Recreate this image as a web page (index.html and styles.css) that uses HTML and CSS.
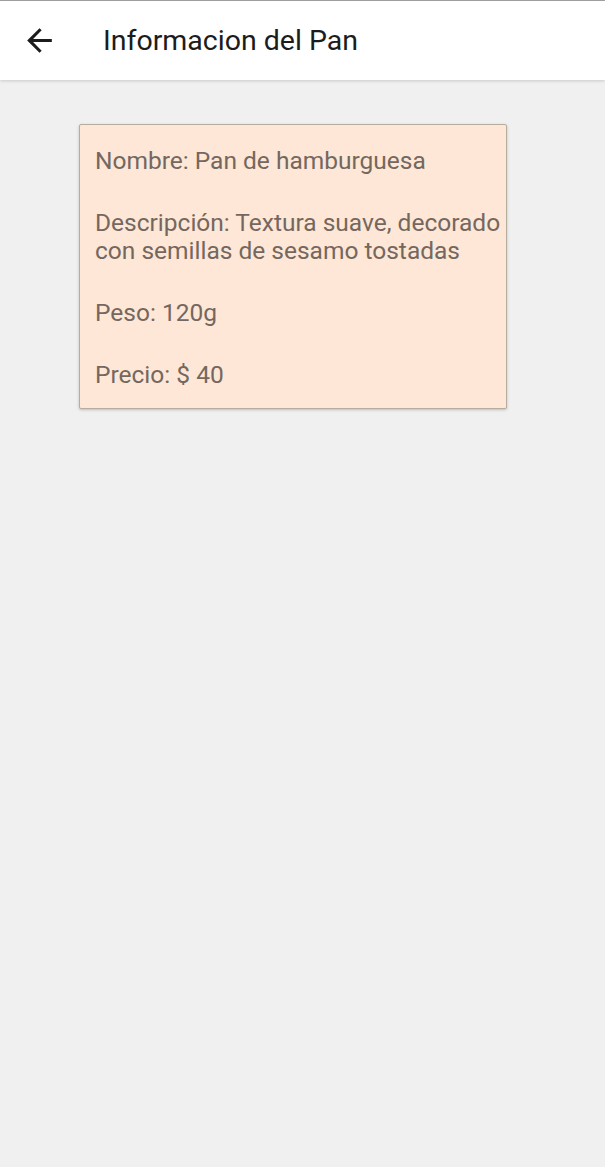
FILE: index.html
```html
<!DOCTYPE html>
<html lang="es">
<head>
<meta charset="utf-8">
<title>Informacion del Pan</title>
<link rel="stylesheet" href="styles.css">
</head>
<body>
<div class="screen">
  <header class="appbar">
    <button class="back" aria-label="Volver">
      <svg viewBox="0 0 24 24" width="37" height="37"><path d="M20 11H7.83l5.59-5.59L12 4l-8 8 8 8 1.41-1.41L7.83 13H20v-2z" fill="#1c1c1c"/></svg>
    </button>
    <h1 class="title">Informacion del Pan</h1>
  </header>
  <main class="content">
    <section class="card">
      <p class="field">Nombre: Pan de hamburguesa</p>
      <p class="field">Descripción: Textura suave, decorado con semillas de sesamo tostadas</p>
      <p class="field">Peso: 120g</p>
      <p class="field">Precio: $ 40</p>
    </section>
  </main>
</div>
</body>
</html>
```
FILE: styles.css
```css
html, body {
  margin: 0;
  padding: 0;
}
body {
  background: #f0f0f0;
  font-family: Roboto, "Noto Sans", sans-serif;
}
.screen {
  width: 605px;
  min-height: 1167px;
  background: #f0f0f0;
  border-top: 1px solid #a3a3a3;
  box-sizing: border-box;
}
.appbar {
  height: 79px;
  background: #ffffff;
  display: flex;
  align-items: center;
  box-shadow: 0 1px 3px rgba(0,0,0,0.16);
  position: relative;
}
.back {
  width: 37px;
  height: 37px;
  margin-left: 21px;
  padding: 0;
  border: 0;
  background: none;
  display: flex;
}
.title {
  margin: 0 0 0 45px;
  font-size: 28.5px;
  font-weight: 400;
  color: #1c1c1c;
}
.content {
  padding: 44px 0 0 79px;
}
.card {
  width: 428px;
  box-sizing: border-box;
  background: #fee7d6;
  border: 1px solid #b7ad9f;
  border-radius: 2px;
  box-shadow: 0 1px 3px rgba(0,0,0,0.22);
  padding: 22px 0 19px 15px;
}
.field {
  margin: 0 0 34px;
  font-size: 24.5px;
  line-height: 28px;
  color: #746760;
}
.field:last-child {
  margin-bottom: 0;
}
```
